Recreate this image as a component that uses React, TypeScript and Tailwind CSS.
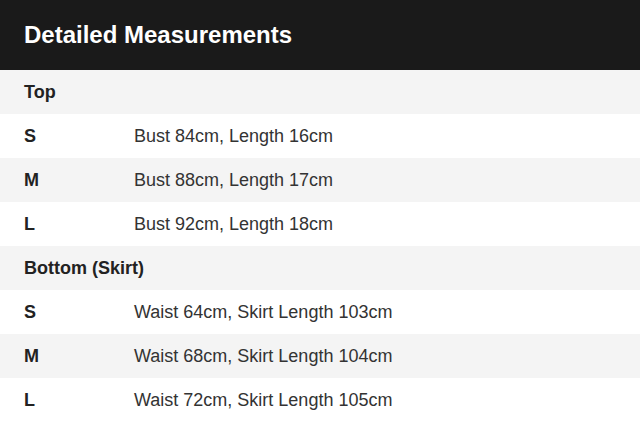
import React from "react";

const sections = [
  {
    title: "Top",
    rows: [
      ["S", "Bust 84cm, Length 16cm"],
      ["M", "Bust 88cm, Length 17cm"],
      ["L", "Bust 92cm, Length 18cm"],
    ],
  },
  {
    title: "Bottom (Skirt)",
    rows: [
      ["S", "Waist 64cm, Skirt Length 103cm"],
      ["M", "Waist 68cm, Skirt Length 104cm"],
      ["L", "Waist 72cm, Skirt Length 105cm"],
    ],
  },
];

export default function App() {
  return (
    <div className="w-[640px] h-[446px] bg-white font-[family-name:Liberation_Sans,Arial,sans-serif]">
      <div className="h-[70px] bg-[#1a1a1a] flex items-center px-6">
        <h1 className="text-[24px] font-bold text-white">Detailed Measurements</h1>
      </div>
      {sections.map((s) => (
        <div key={s.title}>
          <div className="h-[44px] bg-[#f4f4f4] flex items-center px-6 text-[18px] font-bold text-[#222]">
            {s.title}
          </div>
          {s.rows.map(([size, val], i) => (
            <div
              key={size}
              className={`h-[44px] flex items-center px-6 text-[18px] ${i % 2 === 1 ? "bg-[#f4f4f4]" : "bg-white"}`}
            >
              <span className="w-[110px] font-bold text-[#222]">{size}</span>
              <span className="text-[#333]">{val}</span>
            </div>
          ))}
        </div>
      ))}
    </div>
  );
}
